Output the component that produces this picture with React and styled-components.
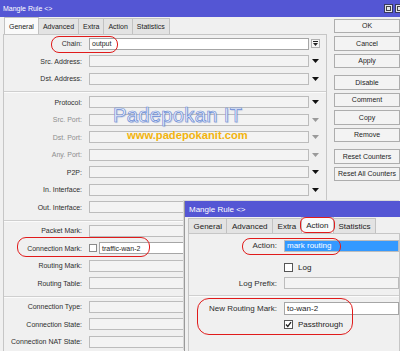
import React from 'react';
import styled, { createGlobalStyle } from 'styled-components';

const GlobalStyle = createGlobalStyle`
  html, body { margin: 0; padding: 0; }
  body {
    width: 400px; height: 351px; overflow: hidden; background: #f0f0f0;
    font-family: "Liberation Sans", Arial, sans-serif;
  }
`;

const Desktop = styled.div`
  position: relative;
  width: 400px;
  height: 351px;
  overflow: hidden;
  background: #f0f0f0;
`;

const MainWindow = styled.div`
  display: flex;
  flex-direction: column;
  width: 100%;
  height: 100%;
  background: #f0f0f0;
`;

const TitleBar = styled.div`
  flex: none;
  height: ${p => p.$h}px;
  display: flex;
  align-items: center;
  justify-content: space-between;
  background: #5456d4;
  color: #fff;
  font-size: ${p => p.$fs}px;
  padding-left: ${p => p.$pl}px;
  white-space: nowrap;
`;

const TitleButtons = styled.div`
  display: flex;
  gap: 2px;
  margin-right: -4px;
`;

const TitleBtn = styled.div`
  width: 7px;
  height: 7px;
  background: #e4e4ea;
  border: 1px solid #3a3a60;
  display: flex;
  align-items: center;
  justify-content: center;
  &::after {
    content: "";
    width: 3px;
    height: 3px;
    border: 1px solid #444;
  }
`;

const MainBody = styled.div`
  flex: 1;
  display: flex;
  padding-left: 3px;
  min-height: 0;
`;

const LeftPane = styled.div`
  width: 324px;
  flex: none;
  display: flex;
  flex-direction: column;
`;

const TabStrip = styled.div`
  flex: none;
  display: flex;
  align-items: flex-end;
  height: ${p => p.$h}px;
  padding-left: ${p => p.$pl}px;
`;

const Tab = styled.div`
  height: ${p => (p.$active ? p.$h : p.$h - 1)}px;
  box-sizing: border-box;
  padding: 0 ${p => p.$pad}px;
  display: flex;
  align-items: center;
  background: ${p => (p.$active ? '#fafafa' : '#e3e3e3')};
  border: 1px solid #c2c2c2;
  border-bottom: none;
  margin-right: -1px;
  font-size: ${p => p.$fs}px;
  color: #222;
  white-space: nowrap;
`;

const Panel = styled.div`
  flex: 1;
  border: 1px solid #c6c6c6;
  border-bottom: none;
  display: flex;
  flex-direction: column;
  min-height: 0;
`;

const Row = styled.div`
  flex: none;
  display: grid;
  grid-template-columns: ${p => p.$cols};
  align-items: center;
  height: ${p => p.$h}px;
`;

const Label = styled.div`
  text-align: right;
  padding-right: 7px;
  font-size: ${p => p.$fs}px;
  color: ${p => (p.$disabled ? '#8e8e8e' : '#2e2e2e')};
  white-space: nowrap;
`;

const Field = styled.div`
  height: ${p => p.$h}px;
  box-sizing: border-box;
  border: 1px solid ${p => (p.$white ? '#a6a6a6' : '#bcbcbc')};
  background: ${p => (p.$selected ? '#3399ff' : p.$white ? '#ffffff' : '#f3f3f3')};
  color: ${p => (p.$selected ? '#ffffff' : '#1e1e1e')};
  font-size: ${p => p.$fs}px;
  display: flex;
  align-items: center;
  padding-left: 2px;
  white-space: nowrap;
  overflow: hidden;
  flex: 1;
  min-width: 0;
`;

const FieldGroup = styled.div`
  display: flex;
  align-items: center;
  gap: 2px;
  min-width: 0;
`;

const ArrowCell = styled.div`
  display: flex;
  justify-content: center;
  align-items: center;
`;

const ComboBtn = styled.div`
  width: 9px;
  height: 9px;
  box-sizing: border-box;
  border: 1px solid #b0b0b0;
  background: #f6f6f6;
  display: flex;
  align-items: center;
  justify-content: center;
`;

const Separator = styled.div`
  flex: none;
  height: 1px;
  background: #cfcfcf;
  border-bottom: 1px solid #fbfbfb;
  margin: ${p => p.$m};
`;

const Spacer = styled.div`
  flex: none;
  height: ${p => p.$h}px;
`;

const CheckBox = styled.div`
  width: ${p => p.$s}px;
  height: ${p => p.$s}px;
  flex: none;
  box-sizing: border-box;
  border: 1px solid ${p => p.$border};
  background: #fff;
  display: flex;
  align-items: center;
  justify-content: center;
`;

const CheckLine = styled.div`
  display: flex;
  align-items: center;
  gap: 5px;
  font-size: ${p => p.$fs}px;
  color: #222;
`;

const ButtonColumn = styled.div`
  flex: 1;
  display: flex;
  flex-direction: column;
  gap: 7px;
  padding: 1.5px 0 0 7px;
`;

const ButtonGroup = styled.div`
  display: flex;
  flex-direction: column;
  gap: 3px;
`;

const Button = styled.div`
  height: 14.5px;
  width: 66px;
  box-sizing: border-box;
  border: 1px solid #adadad;
  background: #f3f3f3;
  display: flex;
  align-items: center;
  justify-content: center;
  font-size: 7px;
  color: #1e1e1e;
  white-space: nowrap;
`;

const SubWindow = styled.div`
  position: absolute;
  left: 184px;
  top: 201px;
  right: 0;
  bottom: 0;
  display: flex;
  flex-direction: column;
  background: #f0f0f0;
  border-left: 1px solid #9a9a9a;
  box-shadow: -1px -1px 0 #d8d8d8;
`;

const SubBody = styled.div`
  flex: 1;
  display: flex;
  flex-direction: column;
  padding-left: 3px;
  min-height: 0;
`;

const Watermark = styled.div`
  position: absolute;
  left: 113px;
  top: 102px;
  display: flex;
  flex-direction: column;
  align-items: flex-start;
  pointer-events: none;
`;

const WmTitle = styled.div`
  font-family: "Liberation Sans", Arial, sans-serif;
  font-size: 20px;
  letter-spacing: 0.4px;
  color: #f4f7fe;
  -webkit-text-stroke: 0.7px #6a8cd6;
  text-shadow: 1px 1px 1px rgba(80, 110, 190, 0.35);
  line-height: 26px;
  white-space: nowrap;
`;

const WmUrl = styled.div`
  font-family: "Liberation Sans", Arial, sans-serif;
  font-weight: bold;
  font-size: 11.2px;
  color: #f2b40e;
  margin-left: 14px;
  line-height: 13px;
  margin-top: 1px;
  white-space: nowrap;
`;

const Ring = styled.div`
  position: absolute;
  left: ${p => p.$x}px;
  top: ${p => p.$y}px;
  width: ${p => p.$w}px;
  height: ${p => p.$h}px;
  box-sizing: border-box;
  border: 1.6px solid #e01b1b;
  border-radius: ${p => p.$r}px;
  pointer-events: none;
`;

const DownArrow = ({ color = '#111' }) => (
  <svg width="7" height="4" viewBox="0 0 7 4">
    <path d="M0 0 H7 L3.5 4 Z" fill={color} />
  </svg>
);

const ComboArrow = () => (
  <svg width="5" height="5" viewBox="0 0 5 5">
    <path d="M0 0.5 H5" stroke="#222" strokeWidth="1" />
    <path d="M0 2 H5 L2.5 5 Z" fill="#222" />
  </svg>
);

const Tick = () => (
  <svg width="7" height="7" viewBox="0 0 7 7">
    <path d="M1 3.5 L2.8 5.5 L6 1.2" stroke="#222" strokeWidth="1.3" fill="none" />
  </svg>
);

const MAIN_COLS = '85px 220px 13px';
const ROW_H = 17.5;

const mainGroups = [
  [
    { label: 'Chain:', value: 'output', white: true, combo: true },
    { label: 'Src. Address:' },
    { label: 'Dst. Address:' },
  ],
  [
    { label: 'Protocol:' },
    { label: 'Src. Port:', disabled: true },
    { label: 'Dst. Port:', disabled: true },
    { label: 'Any. Port:', disabled: true },
    { label: 'P2P:' },
    { label: 'In. Interface:' },
    { label: 'Out. Interface:' },
  ],
  [
    { label: 'Packet Mark:' },
    { label: 'Connection Mark:', check: true, value: 'traffic-wan-2', white: true },
    { label: 'Routing Mark:' },
    { label: 'Routing Table:' },
  ],
  [
    { label: 'Connection Type:' },
    { label: 'Connection State:' },
    { label: 'Connection NAT State:' },
  ],
];

const MainRow = ({ r }) => (
  <Row $cols={MAIN_COLS} $h={ROW_H}>
    <Label $fs={7} $disabled={r.disabled}>{r.label}</Label>
    {r.check ? (
      <FieldGroup>
        <CheckBox $s={8} $border="#8a8a8a" />
        <Field $h={12} $fs={7} $white>{r.value}</Field>
      </FieldGroup>
    ) : (
      <Field $h={12} $fs={7} $white={r.white}>{r.value}</Field>
    )}
    <ArrowCell>
      {r.combo ? (
        <ComboBtn><ComboArrow /></ComboBtn>
      ) : (
        <DownArrow color={r.disabled ? '#9a9a9a' : '#111'} />
      )}
    </ArrowCell>
  </Row>
);

const mainTabs = [
  { t: 'General', active: true },
  { t: 'Advanced' },
  { t: 'Extra' },
  { t: 'Action' },
  { t: 'Statistics' },
];

const buttonGroups = [
  ['OK', 'Cancel', 'Apply'],
  ['Disable', 'Comment', 'Copy', 'Remove'],
  ['Reset Counters', 'Reset All Counters'],
];

const subTabs = [
  { t: 'General' },
  { t: 'Advanced' },
  { t: 'Extra' },
  { t: 'Action', active: true },
  { t: 'Statistics' },
];

const SUB_COLS = '95px 1fr';

export default function App() {
  return (
    <Desktop>
      <GlobalStyle />
      <MainWindow>
        <TitleBar $h={17} $fs={7} $pl={3}>
          <span>Mangle Rule &lt;&gt;</span>
          <TitleButtons>
            <TitleBtn />
            <TitleBtn />
          </TitleButtons>
        </TitleBar>
        <MainBody>
          <LeftPane>
            <TabStrip $h={17} $pl={1}>
              {mainTabs.map(t => (
                <Tab key={t.t} $active={t.active} $h={17} $pad={4} $fs={7}>{t.t}</Tab>
              ))}
            </TabStrip>
            <Panel>
              {mainGroups.map((g, gi) => (
                <React.Fragment key={gi}>
                  {gi > 0 && <Separator $m="3.5px 0 0.5px" />}
                  {g.map(r => <MainRow key={r.label} r={r} />)}
                </React.Fragment>
              ))}
            </Panel>
          </LeftPane>
          <ButtonColumn>
            {buttonGroups.map((g, gi) => (
              <ButtonGroup key={gi}>
                {g.map(b => <Button key={b}>{b}</Button>)}
              </ButtonGroup>
            ))}
          </ButtonColumn>
        </MainBody>
      </MainWindow>

      <Watermark>
        <WmTitle>Padepokan IT</WmTitle>
        <WmUrl>www.padepokanit.com</WmUrl>
      </Watermark>

      <SubWindow>
        <TitleBar $h={16} $fs={8} $pl={4}>
          <span>Mangle Rule &lt;&gt;</span>
        </TitleBar>
        <SubBody>
          <TabStrip $h={16} $pl={0}>
            {subTabs.map(t => (
              <Tab key={t.t} $active={t.active} $h={16} $pad={4.5} $fs={8}>{t.t}</Tab>
            ))}
          </TabStrip>
          <Panel>
            <Spacer $h={4} />
            <Row $cols={SUB_COLS} $h={15.5}>
              <Label $fs={8}>Action:</Label>
              <Field $h={12} $fs={8} $selected>mark routing</Field>
            </Row>
            <Spacer $h={6.5} />
            <Row $cols={SUB_COLS} $h={15.5}>
              <span />
              <CheckLine $fs={8}>
                <CheckBox $s={9} $border="#555" />
                Log
              </CheckLine>
            </Row>
            <Row $cols={SUB_COLS} $h={15.5}>
              <Label $fs={8}>Log Prefix:</Label>
              <Field $h={12} $fs={8} />
            </Row>
            <Separator $m="4px 0 4px" />
            <Row $cols={SUB_COLS} $h={15.5}>
              <Label $fs={8}>New Routing Mark:</Label>
              <Field $h={13} $fs={8} $white>to-wan-2</Field>
            </Row>
            <Row $cols={SUB_COLS} $h={15.5}>
              <span />
              <CheckLine $fs={8}>
                <CheckBox $s={9} $border="#555"><Tick /></CheckBox>
                Passthrough
              </CheckLine>
            </Row>
          </Panel>
        </SubBody>
      </SubWindow>

      <Ring $x={51} $y={36} $w={67} $h={17} $r={8} />
      <Ring $x={17} $y={237} $w={133} $h={20} $r={9} />
      <Ring $x={300} $y={217} $w={35} $h={16} $r={6} />
      <Ring $x={242} $y={238} $w={99} $h={17} $r={8} />
      <Ring $x={197} $y={298} $w={156} $h={37} $r={12} />
    </Desktop>
  );
}
